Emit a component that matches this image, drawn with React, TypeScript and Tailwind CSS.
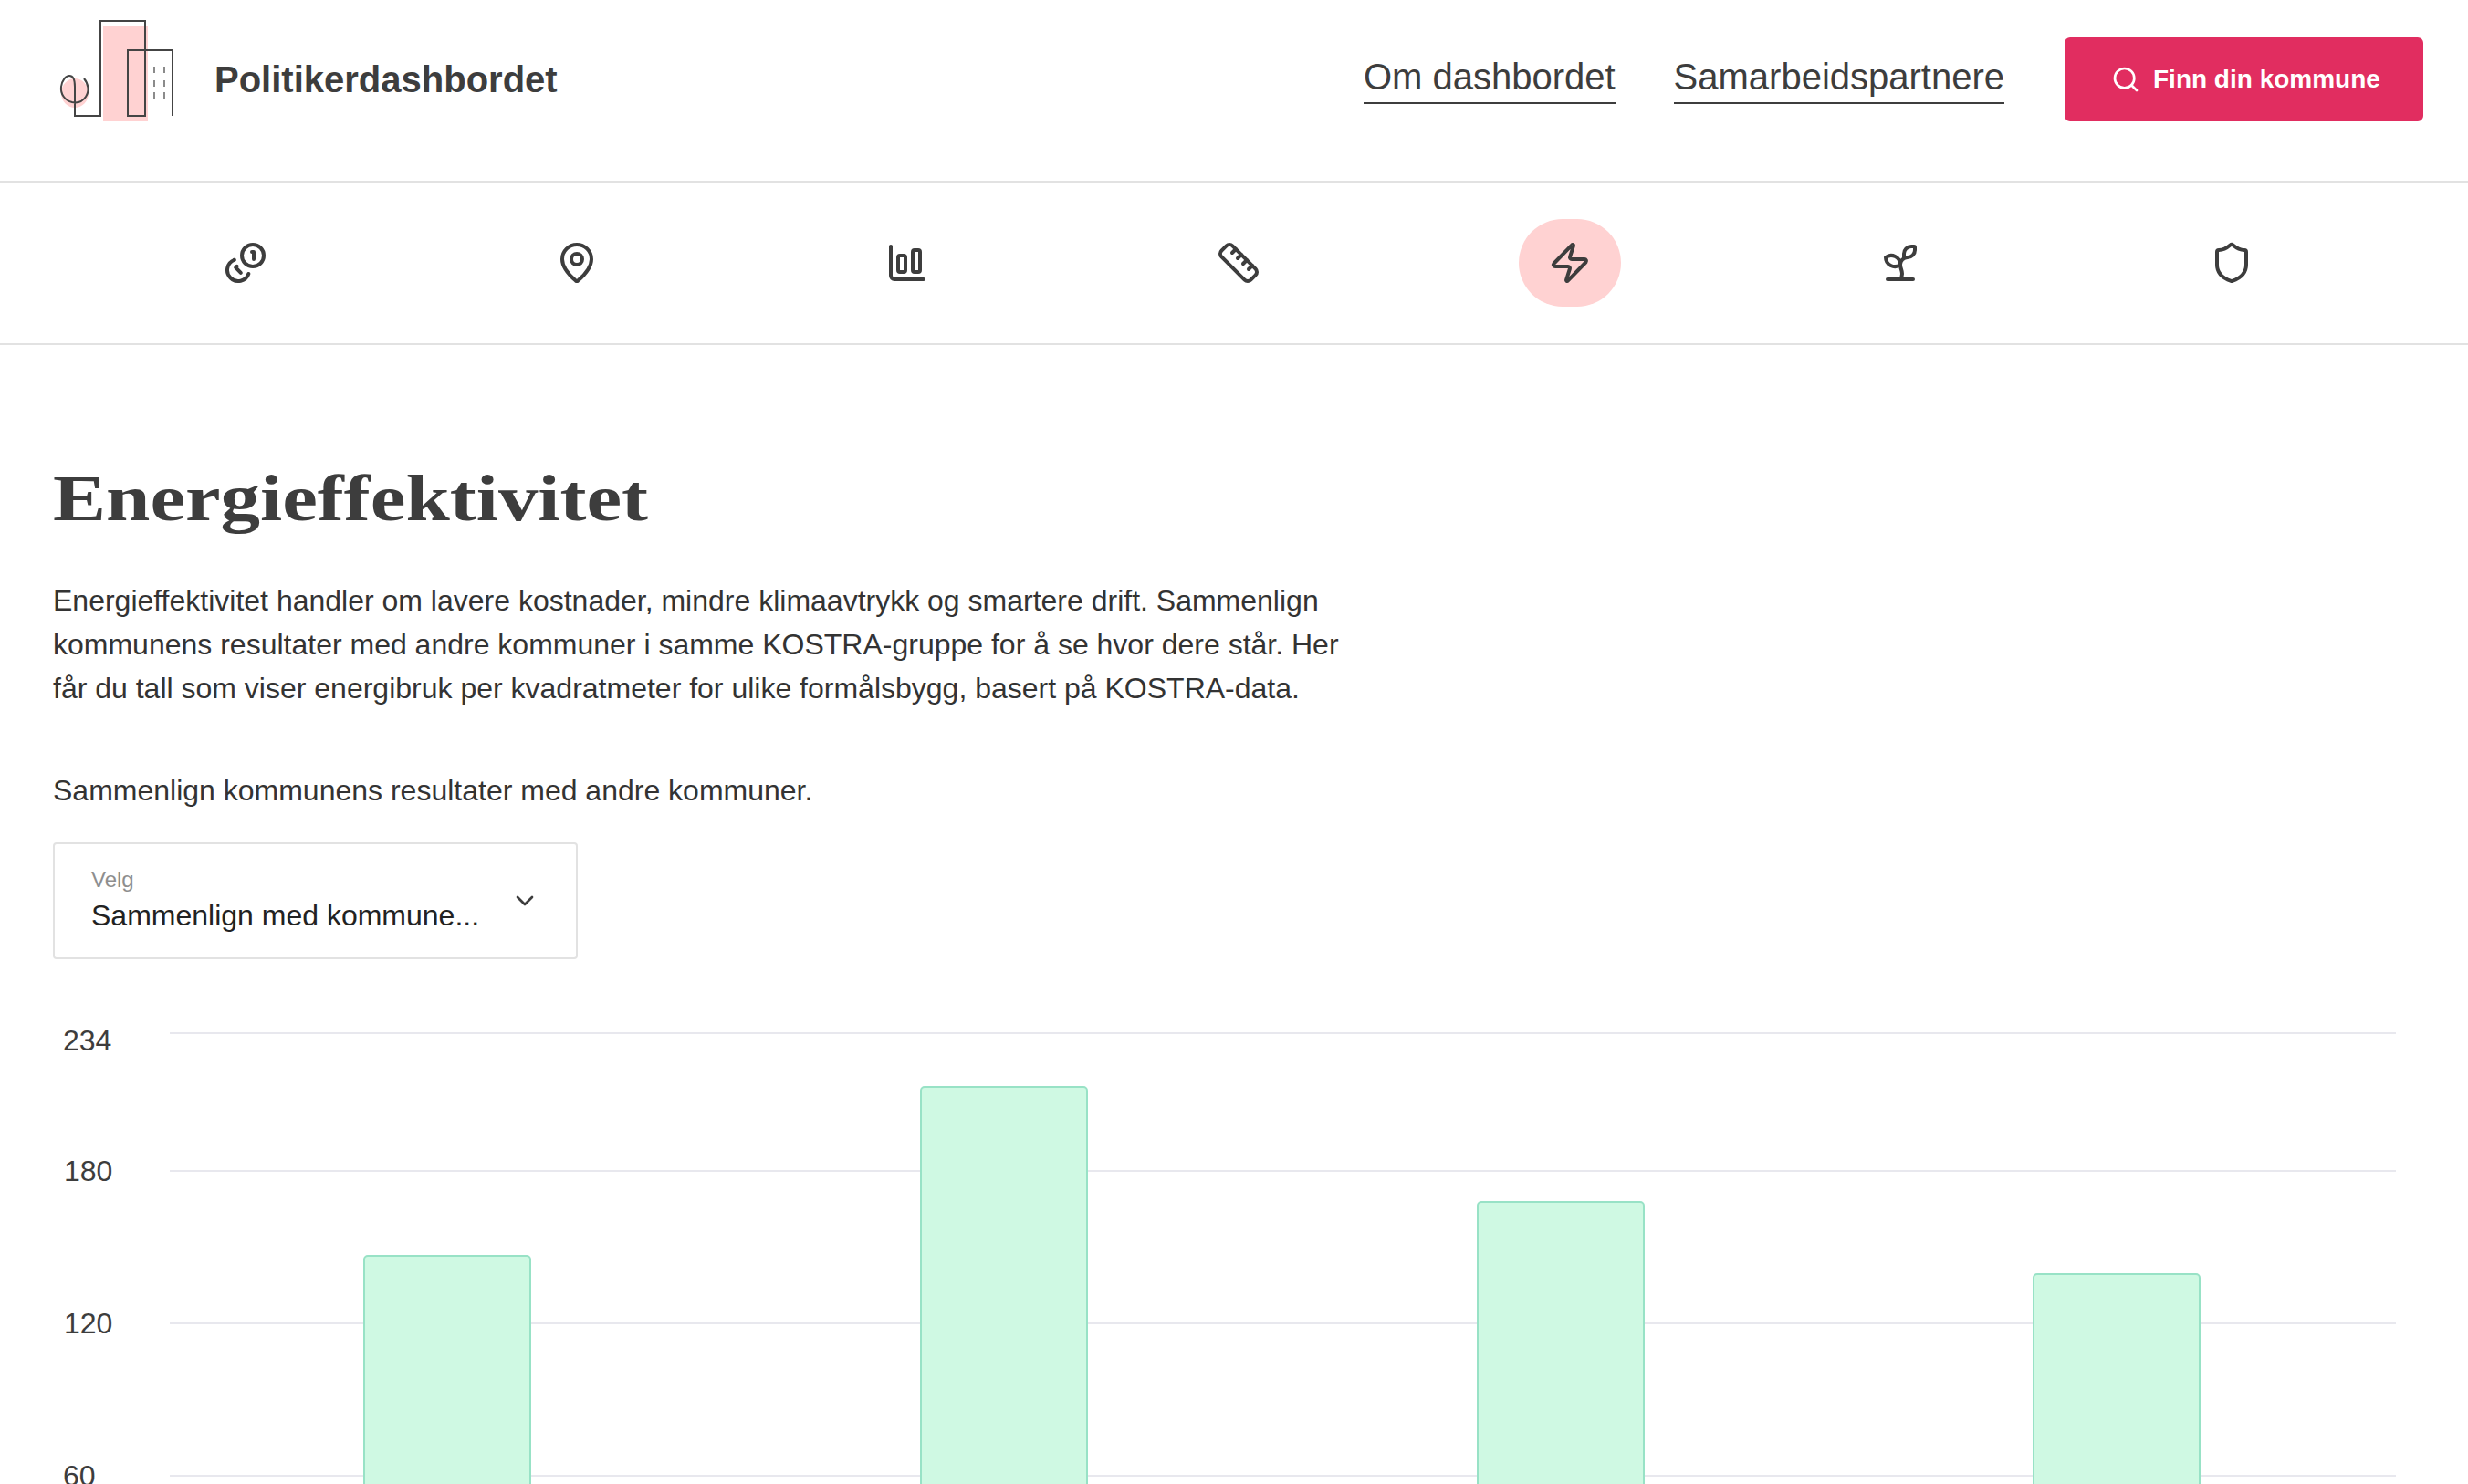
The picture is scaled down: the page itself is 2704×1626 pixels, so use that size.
import React from 'react';
import { ChartColumnBig, ChevronDown, MapPin, Ruler, Search, Shield, Sprout, Zap } from 'lucide-react';

function CoinsIcon() {
  return (
    <svg width="48" height="48" viewBox="0 0 24 24" fill="none" stroke="currentColor" strokeWidth="2" strokeLinecap="round" strokeLinejoin="round">
      <circle cx="16" cy="8" r="6" />
      <path d="M5.91 10.37A6 6 0 1 0 13.66 18" />
      <path d="M15.5 6h1v4" />
      <path d="m7.29 13.88-.7.71 2.82 2.82" />
    </svg>
  );
}

function Logo() {
  return (
    <svg width="135" height="134" viewBox="60 20 135 134" fill="none" className="shrink-0">
      <rect x="113" y="29" width="49" height="104" fill="#ffd2d2" />
      <ellipse cx="82" cy="102" rx="15" ry="16" fill="#ffd2d2" />
      <path
        d="M92 86C97 92 98 100 94 106C90 112 84 113 79 112C71 110 66 103 67 95C68 88 72 83 76 83C80 83 82 88 82 95L82 127L110 127L110 23L159 23L159 127L140 127L140 55L189 55L189 127"
        stroke="#444"
        strokeWidth="2"
      />
      <path d="M169 73v7M180 73v7M169 88v7M180 88v7M169 101v7M180 101v7" stroke="#666" strokeWidth="1.5" />
    </svg>
  );
}

const bars = [
  { x: 399, top: 1376 },
  { x: 1009, top: 1191 },
  { x: 1619, top: 1317 },
  { x: 2228, top: 1396 },
];

const ticks = [
  { label: '234', line: 1132, base: 1151, x: 69 },
  { label: '180', line: 1283, base: 1294, x: 70 },
  { label: '120', line: 1450, base: 1461, x: 70 },
  { label: '60', line: 1617, base: 1628, x: 69 },
];

function Chart() {
  return (
    <svg width="2588" height="526" viewBox="58 1100 2588 526" className="mt-[49px] block">
      {ticks.map((t) => (
        <g key={t.label}>
          <line x1="186" x2="2625" y1={t.line} y2={t.line} stroke="#e8e8ee" strokeWidth="2" />
          <text x={t.x} y={t.base} fontSize="32" fill="#3d3d3d">
            {t.label}
          </text>
        </g>
      ))}
      {bars.map((b) => (
        <rect key={b.x} x={b.x} y={b.top} width="182" height={1700 - b.top} rx="4" fill="#cff9e3" stroke="#98e2c6" strokeWidth="2" />
      ))}
    </svg>
  );
}

export default function App() {
  return (
    <div className="h-[1626px] overflow-hidden bg-white font-['Liberation_Sans',Arial,sans-serif] text-[#3d3d3d]">
      <header className="flex h-[200px] items-center justify-between border-b-2 border-[#e2e2e2] pb-[25px] pl-[60px] pr-[49px]">
        <div className="flex items-center gap-[40px]">
          <Logo />
          <span className="text-[40px] font-bold">Politikerdashbordet</span>
        </div>
        <nav className="flex items-center">
          <a className="border-b-2 border-[#3d3d3d] pb-[4px] text-[40px] leading-[48px]">Om dashbordet</a>
          <a className="ml-[64px] border-b-2 border-[#3d3d3d] pb-[4px] text-[40px] leading-[48px]">Samarbeidspartnere</a>
          <button className="ml-[66px] flex h-[92px] w-[393px] items-center gap-[14px] rounded-md bg-[#e12d60] pl-[51px] text-[28px] font-bold text-white">
            <Search size={32} />
            Finn din kommune
          </button>
        </nav>
      </header>

      <div className="grid h-[178px] grid-cols-7 border-b-2 border-[#e2e2e2] pl-[88px] pr-[78px]">
        <div className="flex items-center justify-center"><CoinsIcon /></div>
        <div className="flex items-center justify-center"><MapPin size={48} /></div>
        <div className="flex items-center justify-center"><ChartColumnBig size={48} /></div>
        <div className="flex items-center justify-center"><Ruler size={48} /></div>
        <div className="flex items-center justify-center">
          <div className="flex h-[96px] w-[112px] items-center justify-center rounded-[48px] bg-[#ffd2d2]"><Zap size={48} /></div>
        </div>
        <div className="flex items-center justify-center"><Sprout size={48} /></div>
        <div className="flex items-center justify-center"><Shield size={48} /></div>
      </div>

      <main className="px-[58px]">
        <h1 className="mt-[128px] origin-left scale-x-[1.208] font-['Liberation_Serif',Georgia,serif] text-[72px] font-bold leading-[80px]">Energieffektivitet</h1>
        <p className="mt-[48px] w-[1440px] text-[32px] leading-[48px] text-[#333]">
          Energieffektivitet handler om lavere kostnader, mindre klimaavtrykk og smartere drift. Sammenlign kommunens resultater med andre kommuner i samme KOSTRA-gruppe for å se hvor dere står. Her får du tall som viser energibruk per kvadratmeter for ulike formålsbygg, basert på KOSTRA-data.
        </p>
        <p className="mt-[64px] text-[32px] leading-[48px] text-[#333]">Sammenlign kommunens resultater med andre kommuner.</p>
        <div className="mt-[33px] flex h-[128px] w-[575px] items-center justify-between rounded border-2 border-[#e2e2e2] pl-[40px] pr-[40px]">
          <div className="pb-[3px]">
            <div className="text-[24px] leading-[30px] text-[#8e8e8e]">Velg</div>
            <div className="mt-[4px] text-[32px] leading-[40px] text-[#222]">Sammenlign med kommune...</div>
          </div>
          <ChevronDown size={32} className="text-[#3d3d3d]" />
        </div>
        <Chart />
      </main>
    </div>
  );
}
